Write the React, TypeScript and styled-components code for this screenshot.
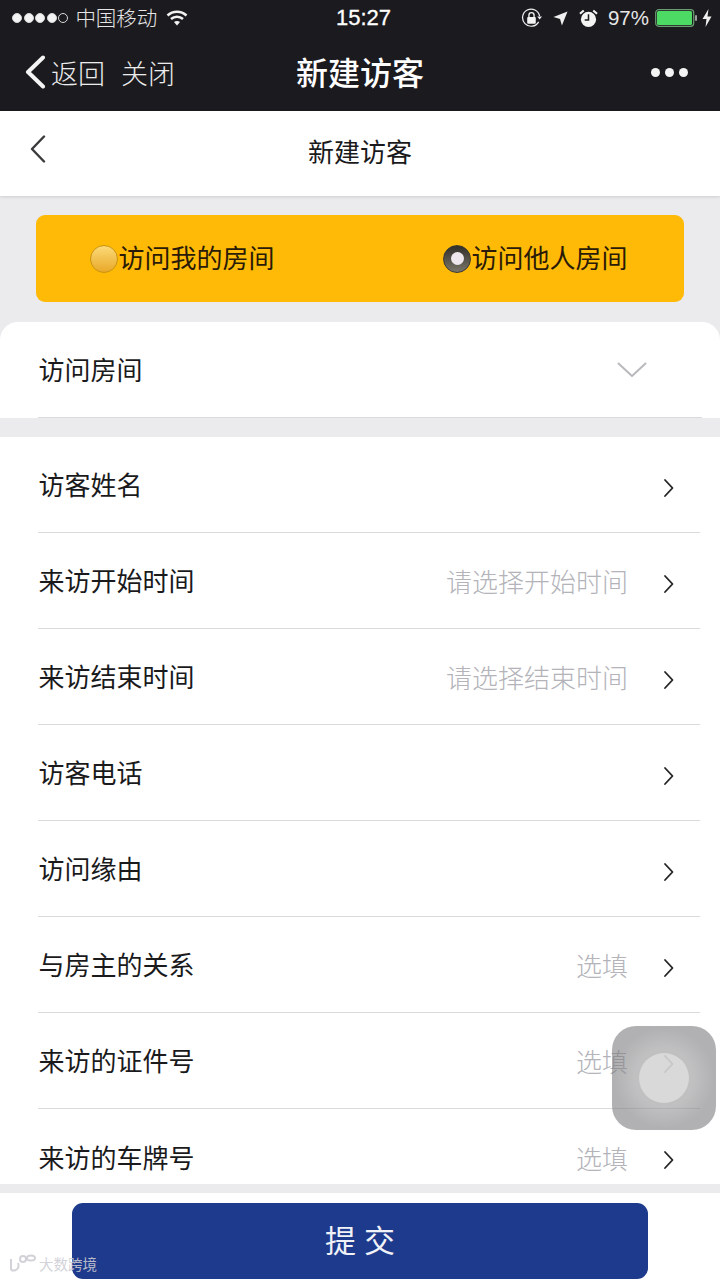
import React from "react";
import styled, { createGlobalStyle } from "styled-components";

const Global = createGlobalStyle`
  html, body { margin: 0; padding: 0; background: #ebebed; }
  * { box-sizing: border-box; }
  body { font-family: "Liberation Sans", "Noto Sans CJK SC", sans-serif; }
`;

const Page = styled.div`
  position: relative;
  width: 720px;
  height: 1280px;
  overflow: hidden;
  display: flex;
  flex-direction: column;
  background: #ebebed;
  color: #1a1a1c;
  font-family: "Liberation Sans", "Noto Sans CJK SC", sans-serif;
`;

const DarkHeader = styled.header`
  height: 111px;
  flex: none;
  background: #1b1a1e;
  color: #fff;
  display: flex;
  flex-direction: column;
`;

const StatusBar = styled.div`
  height: 36px;
  display: flex;
  align-items: center;
  padding: 0 8px 0 12px;
  font-size: 20px;
`;

const Signal = styled.div`
  display: flex;
  gap: 1.6px;
  margin-right: 7px;
`;

const SignalDot = styled.span<{ $empty?: boolean }>`
  width: 10px;
  height: 10px;
  border-radius: 50%;
  background: ${(p) => (p.$empty ? "transparent" : "#f4f4f4")};
  border: 1px solid #d8d8d8;
`;

const StatusLeft = styled.div`
  flex: 1;
  display: flex;
  align-items: center;
  gap: 0;
`;

const Carrier = styled.span`
  font-family: "Noto Sans CJK SC", sans-serif;
  font-size: 20.5px;
  font-weight: 300;
  margin-right: 9px;
  color: #e6e6e6;
  position: relative;
  top: -1px;
`;

const Clock = styled.span`
  position: absolute;
  left: 7px;
  right: 0;
  top: 5px;
  text-align: center;
  font-size: 22px;
  line-height: 26px;
  font-weight: 400;
  -webkit-text-stroke: 0.3px #fff;
`;

const StatusRight = styled.div`
  display: flex;
  align-items: center;
`;

const StatusIcon = styled.svg<{ $gap: number }>`
  margin-left: ${(p) => p.$gap}px;
`;

const Percent = styled.span`
  font-size: 20.5px;
  color: #e6e6e6;
  margin: 0 6px 0 10px;
`;

const NavBar = styled.div`
  flex: 1;
  position: relative;
  display: flex;
  align-items: center;
  justify-content: space-between;
  padding: 0 32px 3px 24px;
`;

const NavLeft = styled.div`
  display: flex;
  align-items: center;
  font-family: "Noto Sans CJK SC", sans-serif;
  font-size: 27px;
  font-weight: 300;
  color: #ececec;
`;

const NavBackLabel = styled.span`
  margin-left: 5px;
  margin-right: 16px;
`;

const NavTitle = styled.div`
  position: absolute;
  left: 0;
  right: 0;
  top: 8px;
  text-align: center;
  font-family: "Noto Sans CJK SC", sans-serif;
  font-size: 32px;
  line-height: 54px;
  font-weight: 500;
  pointer-events: none;
`;

const MoreDots = styled.div`
  display: flex;
  gap: 5px;
`;

const MoreDot = styled.span`
  width: 9px;
  height: 9px;
  border-radius: 50%;
  background: #f4f4f4;
`;

const SubHeader = styled.div`
  height: 85px;
  flex: none;
  background: #fff;
  position: relative;
  display: flex;
  align-items: center;
  justify-content: center;
  box-shadow: 0 1px 3px rgba(0, 0, 0, 0.12);
  font-family: "Noto Sans CJK SC", sans-serif;
  font-size: 26px;
  font-weight: 400;
`;

const SubBack = styled.svg`
  position: absolute;
  left: 30px;
  top: 24px;
`;

const SubTitle = styled.span`
  position: relative;
  top: -3px;
`;

const ToggleCard = styled.div`
  margin: 19px 36px 20px;
  height: 87px;
  flex: none;
  border-radius: 9px;
  background: #ffba07;
  display: grid;
  grid-template-columns: 1fr 1fr;
  align-items: center;
`;

const ToggleOption = styled.div<{ $indent: number }>`
  display: flex;
  align-items: center;
  padding-left: ${(p) => p.$indent}px;
  font-family: "Noto Sans CJK SC", sans-serif;
  font-size: 26px;
  color: #2a1a08;
`;

const ToggleLabel = styled.span`
  position: relative;
  top: -2px;
  left: 0.5px;
`;

const Radio = styled.span<{ $on?: boolean }>`
  width: 28px;
  height: 28px;
  flex: none;
  border-radius: 50%;
  display: flex;
  align-items: center;
  justify-content: center;
  background: ${(p) =>
    p.$on
      ? "linear-gradient(180deg, #2f2e28 0%, #7a766a 100%)"
      : "linear-gradient(180deg, #fbd978 0%, #e9a928 100%)"};
  border: 1px solid ${(p) => (p.$on ? "#3a3830" : "#c9930f")};
`;

const RadioCore = styled.span`
  width: 13px;
  height: 13px;
  border-radius: 50%;
  background: #eee8ee;
`;

const RoomCard = styled.div`
  height: 96px;
  flex: none;
  background: #fff;
  border-radius: 18px 18px 0 0;
  padding-left: 38px;
  padding-right: 18px;
`;

const Row = styled.div<{ $last?: boolean }>`
  height: 96px;
  flex: none;
  display: flex;
  align-items: center;
  border-bottom: ${(p) => (p.$last ? "none" : "1.5px solid #dcd9dc")};
  padding-right: 24px;
  font-family: "Noto Sans CJK SC", sans-serif;
  font-size: 26px;
  font-weight: 400;
`;

const RowLabel = styled.span`
  flex: 1;
  white-space: nowrap;
  padding-left: 0.6px;
  padding-bottom: 2px;
`;

const Hint = styled.span`
  color: #b3b3b9;
  margin-right: 35px;
  font-weight: 300;
`;

const RoomChevron = styled.svg`
  margin-right: 31px;
  margin-top: 1px;
`;

const RowChevron = styled.svg`
  margin-top: 6px;
  margin-right: 1px;
`;

const List = styled.div`
  margin-top: 19px;
  height: 747px;
  flex: none;
  background: #fff;
  padding-left: 38px;
  padding-right: 20px;
  overflow: hidden;
`;

const Footer = styled.div`
  margin-top: 9px;
  flex: 1;
  background: #fff;
  padding: 10px 72px 1px;
`;

const Submit = styled.button`
  width: 100%;
  height: 76px;
  border: none;
  border-radius: 11px;
  background: #1e3a8c;
  color: #f0f2f8;
  font-family: "Noto Sans CJK SC", sans-serif;
  font-size: 31px;
  font-weight: 400;
  letter-spacing: 8px;
  padding: 0 0 5px 8px;
`;

const AssistiveTouch = styled.div`
  position: absolute;
  left: 612px;
  top: 1026px;
  width: 104px;
  height: 104px;
  border-radius: 24px;
  background: radial-gradient(circle at 50% 50%, rgba(150,150,152,0.6) 0 40%, rgba(125,125,128,0.6) 68%);
  display: flex;
  align-items: center;
  justify-content: center;
`;

const TouchCore = styled.span`
  width: 50px;
  height: 50px;
  border-radius: 50%;
  background: rgba(222, 222, 222, 0.8);
`;

const Watermark = styled.div`
  position: absolute;
  left: 8px;
  bottom: 6px;
  display: flex;
  align-items: center;
  gap: 3px;
  font-family: "Noto Sans CJK SC", sans-serif;
  font-size: 14.5px;
  color: rgba(205, 205, 212, 0.9);
`;

const Chevron = () => (
  <RowChevron width="12" height="20" viewBox="0 0 12 20" fill="none">
    <path d="M2 2 L9.5 10 L2 18" stroke="#222" strokeWidth="1.8" strokeLinecap="round" strokeLinejoin="round" />
  </RowChevron>
);

const rows: { label: string; hint?: string }[] = [
  { label: "访客姓名" },
  { label: "来访开始时间", hint: "请选择开始时间" },
  { label: "来访结束时间", hint: "请选择结束时间" },
  { label: "访客电话" },
  { label: "访问缘由" },
  { label: "与房主的关系", hint: "选填" },
  { label: "来访的证件号", hint: "选填" },
  { label: "来访的车牌号", hint: "选填" },
];

export default function App() {
  return (
    <Page>
      <Global />
      <DarkHeader>
        <StatusBar>
          <StatusLeft>
            <Signal>
              {[0, 1, 2, 3, 4].map((i) => (
                <SignalDot key={i} $empty={i === 4} />
              ))}
            </Signal>
            <Carrier>中国移动</Carrier>
            <svg width="22" height="16" viewBox="0 0 22 16" fill="none">
              <path d="M1.5 5.5 C7 0.5 15 0.5 20.5 5.5" stroke="#f2f2f2" strokeWidth="2.6" />
              <path d="M5 9 C8.5 6 13.5 6 17 9" stroke="#f2f2f2" strokeWidth="2.6" />
              <path d="M8 12 L11 15.5 L14 12 C12.5 10.5 9.5 10.5 8 12 Z" fill="#f2f2f2" />
            </svg>
          </StatusLeft>
          <Clock>15:27</Clock>
          <StatusRight>
            <StatusIcon $gap={0} width="21" height="21" viewBox="0 0 22 22" fill="none">
              <path d="M18.5 14.5 A9 9 0 1 1 19.5 8.5" stroke="#eee" strokeWidth="1.3" />
              <path d="M17 9 L22 9 L19.5 12 Z" fill="#eee" />
              <rect x="6.5" y="9.5" width="9" height="7" rx="1" fill="#f4f4f4" />
              <path d="M8.3 9.5 V7.5 A2.7 2.7 0 0 1 13.7 7.5 V9.5" stroke="#f4f4f4" strokeWidth="1.4" />
            </StatusIcon>
            <StatusIcon $gap={11} width="15" height="15" viewBox="0 0 16 16">
              <path d="M15.5 0.5 L9.5 15.5 L7.5 8.5 L0.5 6.5 Z" fill="#f0f0f0" />
            </StatusIcon>
            <StatusIcon $gap={11} width="19" height="19" viewBox="0 0 20 20" fill="none">
              <circle cx="10" cy="11" r="8" fill="#f4f4f4" />
              <path d="M10 5.5 V11.5 H6" stroke="#1b1a1e" strokeWidth="1.6" />
              <path d="M1 5 L5 1.5 M19 5 L15 1.5" stroke="#f4f4f4" strokeWidth="2.2" />
            </StatusIcon>
            <Percent>97%</Percent>
            <svg width="42" height="18" viewBox="0 0 42 18" fill="none">
              <rect x="0.7" y="0.7" width="38" height="16.6" rx="3" stroke="#6a9d72" strokeWidth="1.2" />
              <rect x="2" y="2" width="35" height="14" rx="1.5" fill="#4cd964" />
              <rect x="40" y="6" width="2" height="6" rx="1" fill="#9aa09c" />
            </svg>
            <StatusIcon $gap={5} width="10" height="18" viewBox="0 0 10 18">
              <path d="M6.5 0 L0.5 10 H4.5 L3.5 18 L9.5 7.5 H5.5 Z" fill="#f0f0f0" />
            </StatusIcon>
          </StatusRight>
        </StatusBar>
        <NavBar>
          <NavLeft>
            <svg width="22" height="34" viewBox="0 0 22 34" fill="none">
              <path d="M19 2.5 L4 17 L19 31.5" stroke="#f4f4f4" strokeWidth="4" strokeLinecap="round" strokeLinejoin="round" />
            </svg>
            <NavBackLabel>返回</NavBackLabel>
            关闭
          </NavLeft>
          <NavTitle>新建访客</NavTitle>
          <MoreDots>
            <MoreDot />
            <MoreDot />
            <MoreDot />
          </MoreDots>
        </NavBar>
      </DarkHeader>

      <SubHeader>
        <SubBack width="16" height="28" viewBox="0 0 16 28" fill="none">
          <path d="M14 1.5 L2 14 L14 26.5" stroke="#3a3a3c" strokeWidth="2.4" strokeLinecap="round" strokeLinejoin="round" />
        </SubBack>
        <SubTitle>新建访客</SubTitle>
      </SubHeader>

      <ToggleCard>
        <ToggleOption $indent={54}>
          <Radio />
          <ToggleLabel>访问我的房间</ToggleLabel>
        </ToggleOption>
        <ToggleOption $indent={83}>
          <Radio $on>
            <RadioCore />
          </Radio>
          <ToggleLabel>访问他人房间</ToggleLabel>
        </ToggleOption>
      </ToggleCard>

      <RoomCard>
        <Row>
          <RowLabel>访问房间</RowLabel>
          <RoomChevron width="30" height="16" viewBox="0 0 30 16" fill="none">
            <path d="M1.5 1.5 L15 14 L28.5 1.5" stroke="#b9b9bd" strokeWidth="2" strokeLinecap="round" strokeLinejoin="round" />
          </RoomChevron>
        </Row>
      </RoomCard>

      <List>
        {rows.map((r, i) => (
          <Row key={r.label} $last={i === rows.length - 1}>
            <RowLabel>{r.label}</RowLabel>
            {r.hint && <Hint>{r.hint}</Hint>}
            <Chevron />
          </Row>
        ))}
      </List>

      <Footer>
        <Submit>提交</Submit>
      </Footer>

      <AssistiveTouch>
        <TouchCore />
      </AssistiveTouch>
      <Watermark>
        <svg width="28" height="20" viewBox="0 0 28 20" fill="none" stroke="currentColor" strokeWidth="2">
          <path d="M3 5 V16 M3 16 C8 18 12 14 10 9" />
          <circle cx="15" cy="5" r="3" />
          <ellipse cx="23" cy="4" rx="4" ry="2.5" />
        </svg>
        大数跨境
      </Watermark>
    </Page>
  );
}
